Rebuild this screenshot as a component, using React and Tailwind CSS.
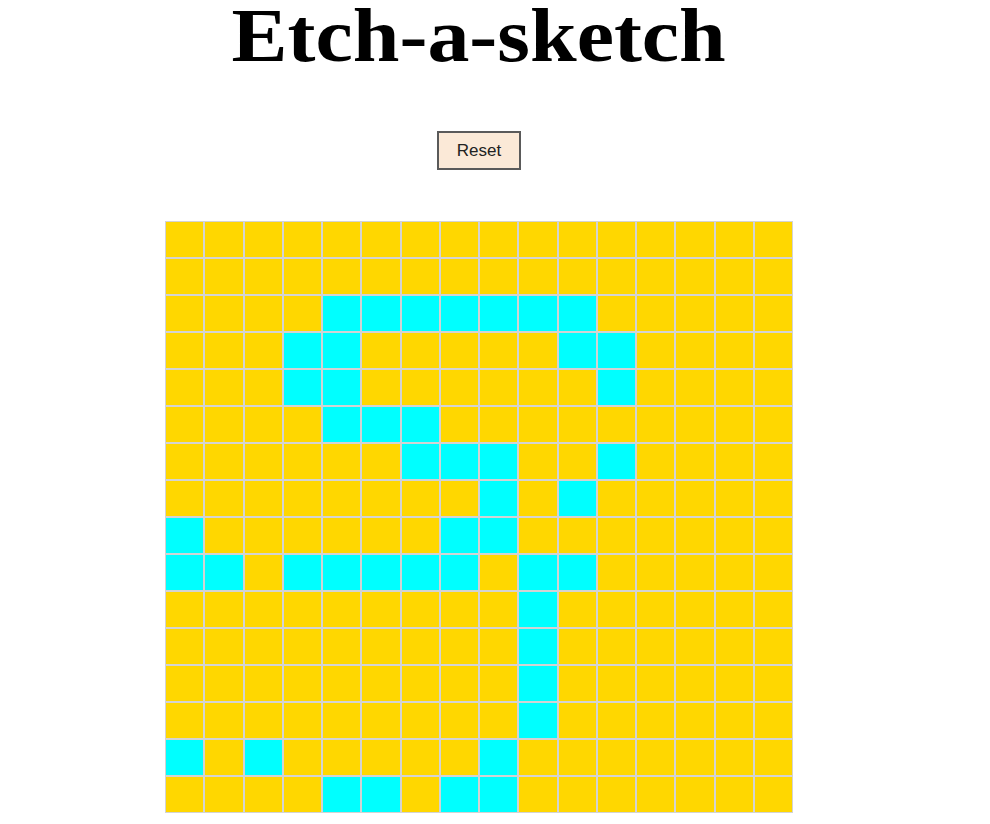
const painted = {
  2: [4, 5, 6, 7, 8, 9, 10],
  3: [3, 4, 10, 11],
  4: [3, 4, 11],
  5: [4, 5, 6],
  6: [6, 7, 8, 11],
  7: [8, 10],
  8: [0, 7, 8],
  9: [0, 1, 3, 4, 5, 6, 7, 9, 10],
  10: [9],
  11: [9],
  12: [9],
  13: [9],
  14: [0, 2, 8],
  15: [4, 5, 7, 8],
};

const rows = Array.from({ length: 16 }, (_, r) => r);
const cols = Array.from({ length: 16 }, (_, c) => c);

function App() {
  return (
    <div className="w-[958px] flex flex-col items-center bg-white">
      <h1 className="text-[77px] leading-[70px] font-bold scale-x-[1.09] text-black font-['Liberation_Serif',serif]">
        Etch-a-sketch
      </h1>

      <button className="mt-[61px] w-[84px] h-[39px] bg-[#fbe9d7] border-2 border-[#5a5a5a] text-[17px] text-[#222222] font-['Liberation_Sans',Arial,sans-serif]">
        Reset
      </button>

      <div className="mt-[51px] w-[628px] h-[592px] grid grid-cols-16 grid-rows-16">
        {rows.map((r) =>
          cols.map((c) => (
            <div
              key={r + "-" + c}
              className={
                (painted[r] && painted[r].includes(c) ? "bg-[#00ffff]" : "bg-[#ffd700]") +
                " border border-[#d3d3d3]"
              }
            />
          ))
        )}
      </div>
    </div>
  );
}

export default App;
